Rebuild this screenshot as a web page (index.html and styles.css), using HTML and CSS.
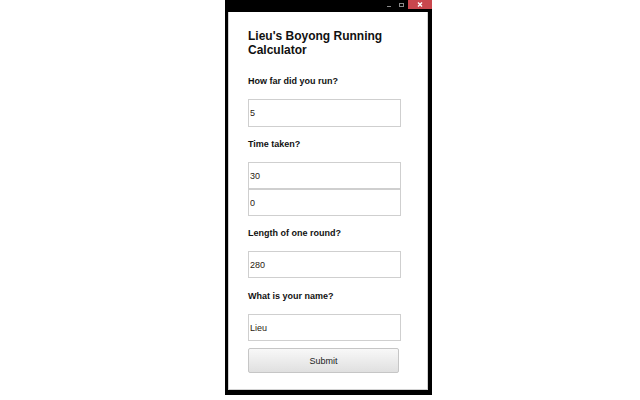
FILE: index.html
```
<!DOCTYPE html>
<html>
<head>
<meta charset="utf-8">
<link rel="stylesheet" href="styles.css">
</head>
<body>
<div class="window">
  <div class="titlebar">
    <span class="ctl-min"></span>
    <span class="ctl-max"></span>
    <span class="ctl-close"><svg width="24" height="9" viewBox="0 0 24 9"><path d="M10 2.5 L14 6.5 M14 2.5 L10 6.5" stroke="#fff" stroke-width="1.4" fill="none"/></svg></span>
  </div>
  <div class="client">
    <h1 class="title">Lieu's Boyong Running Calculator</h1>
    <label class="field-label gap-first">How far did you run?</label>
    <input class="field field-tall gap-input" type="text" value="5">
    <label class="field-label gap-label">Time taken?</label>
    <input class="field gap-input" type="text" value="30">
    <input class="field" type="text" value="0">
    <label class="field-label gap-label">Length of one round?</label>
    <input class="field gap-input" type="text" value="280">
    <label class="field-label gap-input">What is your name?</label>
    <input class="field gap-input" type="text" value="Lieu">
    <button class="submit" type="button">Submit</button>
  </div>
</div>
</body>
</html>
```
FILE: styles.css
```
html, body {
  margin: 0;
  padding: 0;
  background: #fff;
}
body {
  font-family: "Liberation Sans", Arial, sans-serif;
}
.window {
  margin-left: 225px;
  width: 207px;
  height: 395px;
  box-sizing: border-box;
  background: #000;
  padding: 0 4px 5px 3px;
  display: flex;
  flex-direction: column;
}
.titlebar {
  height: 12px;
  flex: none;
  display: flex;
  justify-content: flex-end;
  align-items: flex-start;
  margin-right: -4px;
}
.ctl-min {
  width: 4px;
  height: 1px;
  background: #8a8a8a;
  margin-top: 6px;
  margin-right: 8px;
}
.ctl-max {
  width: 5px;
  height: 4px;
  box-sizing: border-box;
  border: 1px solid #8a8a8a;
  margin-top: 3px;
  margin-right: 4px;
}
.ctl-close {
  width: 24px;
  height: 9px;
  background: #c9474d;
  display: block;
}
.ctl-close svg {
  display: block;
}
.client {
  flex: 1;
  background: #fff;
  border: 1px solid #d2d2d2;
  border-top: 0;
  padding: 17px 26px 0 19px;
  display: flex;
  flex-direction: column;
  align-items: stretch;
}
.title {
  margin: 0;
  font-size: 12px;
  line-height: 14px;
  font-weight: bold;
  color: #111;
}
.field-label {
  display: block;
  font-size: 9px;
  line-height: 12px;
  font-weight: bold;
  color: #111;
}
.gap-first { margin-top: 18px; }
.gap-input { margin-top: 12px; }
.gap-label { margin-top: 11px; }
.field {
  display: block;
  width: 100%;
  height: 27px;
  box-sizing: border-box;
  margin-bottom: 0;
  border: 1px solid #cfcfcf;
  padding: 0 1px;
  font-family: "Liberation Sans", Arial, sans-serif;
  font-size: 9px;
  color: #2a1a10;
  background: #fff;
  outline: none;
}
.field-tall {
  height: 28px;
}
.submit {
  margin-top: 7px;
  width: 151px;
  height: 25px;
  box-sizing: border-box;
  border: 1px solid #c6c6c6;
  border-radius: 2px;
  background: linear-gradient(#f8f8f8, #e0e0e0);
  font-family: "Liberation Sans", Arial, sans-serif;
  font-size: 9px;
  color: #222;
  padding: 0;
}
```
